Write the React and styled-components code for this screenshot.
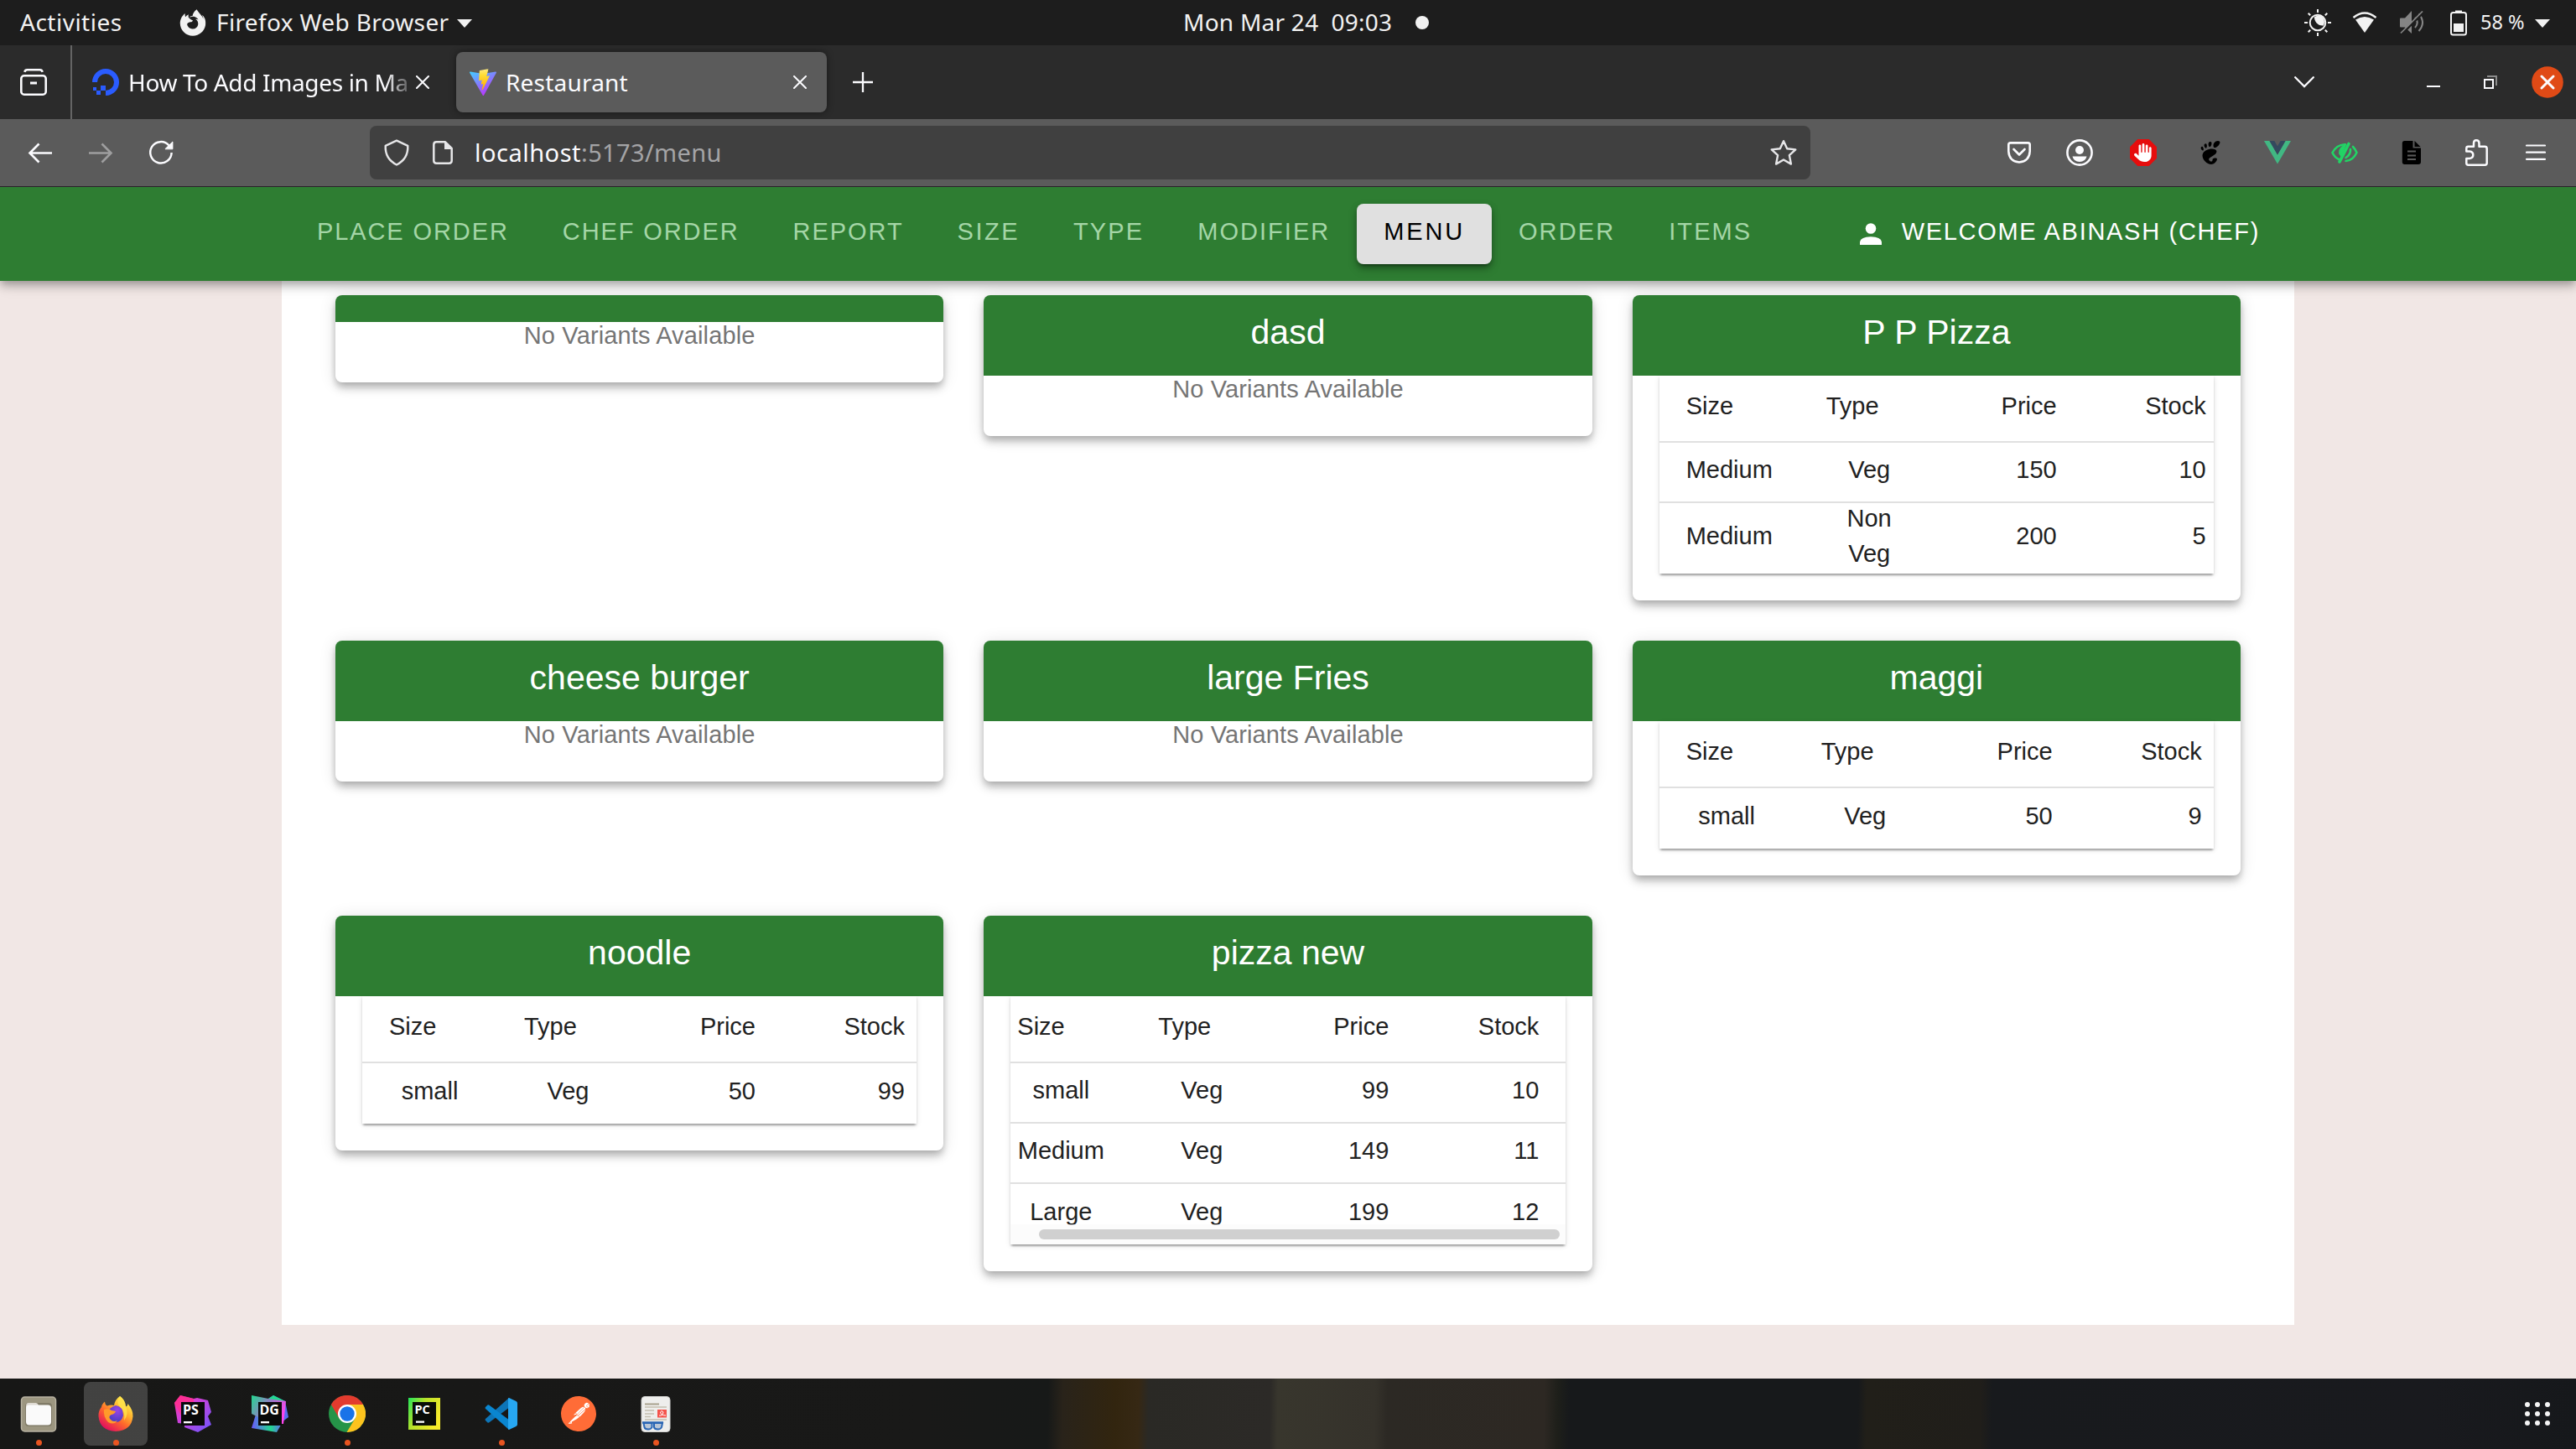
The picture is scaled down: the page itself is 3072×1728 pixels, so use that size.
import React from "react";
import styled, { createGlobalStyle } from "styled-components";
import { FaFirefoxBrowser, FaHand } from "react-icons/fa6";
import { SiGnome, SiPostman } from "react-icons/si";

const uiFont = '"Noto Sans", "Open Sans", sans-serif';
const pageFont = '"Liberation Sans", Arial, sans-serif';

const GlobalStyle = createGlobalStyle`
  *, *::before, *::after { box-sizing: border-box; }
  html, body { margin: 0; padding: 0; background: #181817; }
  svg { display: block; flex: none; }
`;

const Screen = styled.div`
  width: 3072px;
  height: 1728px;
  display: flex;
  flex-direction: column;
  overflow: hidden;
  font-family: ${uiFont};
`;

/* ---------- desktop top bar ---------- */

const TopBar = styled.header`
  height: 54px;
  flex: none;
  display: grid;
  grid-template-columns: 1411px 1fr auto;
  align-items: center;
  background: #1d1d1d;
  color: #f2f2f2;
  font-size: 28px;
  white-space: pre;
`;

const BarGroup = styled.div`
  display: flex;
  align-items: center;
  height: 54px;
  padding: 0 ${(p) => p.$right || 0}px 0 ${(p) => p.$left || 0}px;
`;

const BarText = styled.span`
  line-height: 40px;
  padding-bottom: 2px;
  margin-left: ${(p) => p.$ml || 0}px;
  letter-spacing: ${(p) => p.$ls || 0}px;
  font-size: ${(p) => p.$size || 28}px;
  width: ${(p) => p.$w}px;
  flex: none;
`;

const Caret = styled.span`
  width: 0;
  height: 0;
  margin-top: 2px;
  border-left: 9px solid transparent;
  border-right: 9px solid transparent;
  border-top: 10px solid #f2f2f2;
`;

const NotifyDot = styled.span`
  width: 16px;
  height: 16px;
  border-radius: 50%;
  background: #f2f2f2;
`;

const Status = styled.span`
  display: flex;
  align-items: center;
  margin-right: ${(p) => p.$mr}px;
`;

/* ---------- browser tabs ---------- */

const TabStrip = styled.div`
  height: 88px;
  flex: none;
  display: flex;
  align-items: center;
  background: #2b2b2b;
  color: #fbfbfe;
`;

const ViewButton = styled.div`
  width: 86px;
  height: 88px;
  padding-left: 24px;
  display: flex;
  align-items: center;
  border-right: 2px solid #646464;
`;

const Tab = styled.div`
  width: 442px;
  height: 72px;
  margin-left: 8px;
  padding: 0 24px 0 16px;
  display: flex;
  align-items: center;
  gap: 11px;
  border-radius: 8px;
  background: ${(p) => (p.$active ? "#5b5b5b" : "transparent")};
  box-shadow: ${(p) => (p.$active ? "0 0 8px rgba(0,0,0,.45)" : "none")};
`;

const TabTitle = styled.span`
  flex: 1;
  margin-right: ${(p) => (p.$fade ? -10 : 0)}px;
  white-space: nowrap;
  font-size: 28px;
  line-height: 44px;
  letter-spacing: ${(p) => p.$ls || 0}px;
  mask-image: ${(p) => (p.$fade ? "linear-gradient(90deg,#000 0,#000 90%,transparent 100%)" : "none")};
`;

const NewTab = styled.div`
  margin-left: 31px;
`;

const WindowControls = styled.div`
  margin-left: auto;
  display: flex;
  align-items: center;
  padding-right: 15px;
`;

const Control = styled.div`
  width: ${(p) => p.$w}px;
  display: flex;
  justify-content: flex-start;
`;

/* ---------- browser toolbar ---------- */

const Toolbar = styled.div`
  height: 81px;
  flex: none;
  display: flex;
  align-items: center;
  background: #5b5b5b;
  border-bottom: 1px solid #2a1f2a;
  color: #fbfbfe;
`;

const NavButtons = styled.div`
  width: 441px;
  padding-left: 32px;
  display: flex;
  gap: 40px;
`;

const UrlBar = styled.div`
  width: 1718px;
  height: 64px;
  padding: 0 16px;
  display: flex;
  align-items: center;
  border-radius: 8px;
  background: #404040;
  color: #e6e6e8;
`;

const UrlIcons = styled.div`
  display: flex;
  align-items: center;
  gap: 27px;
`;

const Url = styled.span`
  flex: 1;
  padding-left: 26px;
  font-size: 29px;
  letter-spacing: 0.35px;
  line-height: 44px;
  color: #a4a4a6;
`;

const Host = styled.span`
  color: #fbfbfe;
  letter-spacing: 0.5px;
`;

const Extensions = styled.div`
  margin-left: auto;
  padding-right: 20px;
  display: flex;
`;

const ExtSlot = styled.div`
  width: ${(p) => p.$w || 80}px;
  display: flex;
  align-items: center;
  justify-content: center;
`;

const StopSign = styled.span`
  width: 32px;
  height: 32px;
  display: flex;
  align-items: center;
  justify-content: center;
  background: #e60d0d;
  clip-path: polygon(29% 0, 71% 0, 100% 29%, 100% 71%, 71% 100%, 29% 100%, 0 71%, 0 29%);
`;

/* ---------- application ---------- */

const Page = styled.div`
  flex: 1;
  display: flex;
  flex-direction: column;
  background: #f1e7e5;
  font-family: ${pageFont};
  overflow: hidden;
`;

const AppBar = styled.nav`
  height: 112px;
  flex: none;
  position: relative;
  z-index: 2;
  display: flex;
  align-items: center;
  padding: 0 377px 0 346px;
  background: #2e7d32;
  box-shadow: 0 4px 8px -2px rgba(0, 0, 0, 0.2), 0 8px 10px 0 rgba(0, 0, 0, 0.14),
    0 2px 20px 0 rgba(0, 0, 0, 0.12);
`;

const NavItem = styled.a`
  height: 72px;
  padding: 0 32px 6px;
  display: flex;
  align-items: center;
  border-radius: 8px;
  font-size: 29px;
  letter-spacing: ${(p) => p.$ls}px;
  white-space: nowrap;
  color: ${(p) => (p.$active ? "#000" : "#a5d6a7")};
  background: ${(p) => (p.$active ? "#e0e0e0" : "transparent")};
  box-shadow: ${(p) =>
    p.$active
      ? "0 6px 2px -4px rgba(0,0,0,.2), 0 4px 4px 0 rgba(0,0,0,.14), 0 2px 10px 0 rgba(0,0,0,.12), 0 6px 12px rgba(0,0,0,.2)"
      : "none"};
`;

const User = styled.div`
  margin-left: auto;
  display: flex;
  align-items: center;
  gap: 24px;
  color: #fff;
  font-size: 29px;
  letter-spacing: 1.7px;
  white-space: nowrap;
`;

const UserName = styled.span`
  padding-bottom: 6px;
`;

const Content = styled.main`
  width: 2400px;
  height: 1245px;
  margin: 0 auto;
  padding: 17px 64px 64px;
  background: #fff;
`;

const CardGrid = styled.div`
  display: grid;
  grid-template-columns: repeat(3, 1fr);
  grid-template-rows: 364px 280px 424px;
  gap: 48px;
  align-items: start;
`;

const CardBox = styled.section`
  min-width: 0;
  border-radius: 8px;
  background: #fff;
  overflow: hidden;
  box-shadow: 0 4px 8px -2px rgba(0, 0, 0, 0.2), 0 8px 10px 0 rgba(0, 0, 0, 0.14),
    0 2px 20px 0 rgba(0, 0, 0, 0.12);
`;

const CardTitle = styled.h2`
  margin: 0;
  height: ${(p) => (p.$empty ? 32 : 96)}px;
  padding: ${(p) => (p.$empty ? "0" : "16px 0 24px")};
  line-height: 56px;
  background: #2e7d32;
  color: #fff;
  font-size: 41px;
  font-weight: 400;
  text-align: center;
`;

const CardBody = styled.div`
  padding: 0 32px 32px;
`;

const Empty = styled.p`
  margin: 0;
  height: 40px;
  line-height: 33px;
  text-align: center;
  color: #757575;
  font-size: 29px;
  letter-spacing: 0.13px;
`;

const Paper = styled.div`
  position: relative;
  height: ${(p) => p.$h}px;
  overflow: hidden;
  background: #fff;
`;

const PaperShadow = styled.div`
  box-shadow: 0 4px 2px -2px rgba(0, 0, 0, 0.2), 0 2px 2px 0 rgba(0, 0, 0, 0.14),
    0 2px 6px 0 rgba(0, 0, 0, 0.12);
`;

const Row = styled.div`
  display: grid;
  grid-template-columns: ${(p) => p.$cols};
  grid-template-rows: 100%;
  align-items: center;
  height: ${(p) => p.$h}px;
  width: 700px;
  margin-left: ${(p) => -p.$scroll}px;
  border-bottom: ${(p) => (p.$last ? "none" : "2px solid #e0e0e0")};
`;

const Cell = styled.div`
  padding: 0 ${(p) => (p.$narrow ? 44 : 32)}px 7px;
  text-align: ${(p) => p.$align};
  font-size: 29px;
  line-height: 42px;
  color: #212121;
`;

const ScrollTrack = styled.div`
  position: absolute;
  left: 0;
  right: 0;
  bottom: 0;
  height: 24px;
  padding: 6px 7px 6px 34px;
  background: rgba(250, 250, 250, 0.6);
`;

const ScrollThumb = styled.div`
  height: 12px;
  border-radius: 6px;
  background: #d0d0d0;
`;

/* ---------- dock ---------- */

const Dock = styled.footer`
  height: 84px;
  flex: none;
  display: flex;
  align-items: center;
  gap: 16px;
  padding: 0 31px 0 8px;
  background: linear-gradient(
    91deg,
    #171716 0,
    #191918 1100px,
    #171918 1250px,
    #29231a 1268px,
    #32250f 1330px,
    #362814 1358px,
    #2a2925 1370px,
    #2c2a27 1515px,
    #38362d 1524px,
    #35322b 1640px,
    #2c2924 1655px,
    #2d2823 1842px,
    #1e1f1a 1858px,
    #17191b 1872px,
    #17191b 2216px,
    #211f19 2226px,
    #201e1a 2362px,
    #181a1d 2376px,
    #191a1e 2900px,
    #16181b 3072px
  );
`;

const DockSlot = styled.div`
  width: 76px;
  height: 76px;
  padding-top: 16px;
  display: flex;
  flex-direction: column;
  align-items: center;
  gap: 9px;
  border-radius: 8px;
  background: ${(p) => (p.$active ? "rgba(255,255,255,.19)" : "transparent")};
`;

const RunDot = styled.span`
  width: 7px;
  height: 7px;
  border-radius: 50%;
  background: #e95420;
`;

const AppsGrid = styled.div`
  margin-left: auto;
  display: grid;
  grid-template-columns: repeat(3, 6px);
  gap: 5px 6px;
`;

const AppsDot = styled.span`
  height: 6px;
  border-radius: 3px;
  background: #f5f5f5;
`;

/* ---------- icons ---------- */

const Line = ({ w = 32, h = 32, sw = 2, children, ...rest }) => (
  <svg width={w} height={h} viewBox={`0 0 ${w} ${h}`} fill="none" stroke="currentColor" strokeWidth={sw} {...rest}>
    {children}
  </svg>
);

const NightLight = () => (
  <Line>
    <circle cx="16" cy="16" r="9.3" />
    <path d="M12 9 C11.500 14.500 16.500 20.500 23 19.500 C26 13 21.500 6.500 16 7.500Z" fill="currentColor" stroke="none" />
    <path d="M16 0v4M16 28v4M0 16h4M28 16h4M4.700 4.700l2.500 2.500M24.800 24.800l2.500 2.500M4.700 27.300l2.500-2.500M24.800 7.200l2.500-2.500" />
  </Line>
);

const Wifi = () => (
  <Line w={30} h={26}>
    <path d="M1.500 7 Q15-4 28.500 7" strokeWidth="2.400" />
    <path d="M4 9.500 Q15 2.500 26 9.500 L15 25Z" fill="currentColor" stroke="none" />
  </Line>
);

const Muted = () => (
  <Line w={28} h={28} color="#858585">
    <path d="M0 9.500 Q0 8.500 1 8.500 H6 L14 0 V27 L6 19.500 H1 Q0 19.500 0 18.500Z" fill="currentColor" stroke="none" />
    <path d="M18 8 Q23.500 14 18 20M22.500 3.500 Q31.500 14 22.500 24" />
    <path d="M1 29 L27 3" stroke="#1d1d1d" strokeWidth="2.500" />
    <path d="M1 26.500 L27 0.500" strokeWidth="1.700" />
  </Line>
);

const Battery = () => (
  <Line w={20} h={31}>
    <rect x="1" y="3" width="18" height="26.500" rx="2.500" />
    <path d="M6 0.500h8v2h-8z" fill="currentColor" stroke="none" />
    <path d="M4 16h12v10H4z" fill="currentColor" stroke="none" />
  </Line>
);

const FirefoxView = () => (
  <Line>
    <rect x="1.300" y="8.300" width="29.400" height="22.400" rx="3.500" strokeWidth="2.600" />
    <path d="M5.300 3.800 Q6 1.300 8.500 1.300 H23.500 Q26 1.300 26.700 3.800" strokeWidth="2.600" />
    <path d="M12 17h8" strokeWidth="3" />
  </Line>
);

const OceanLogo = () => (
  <Line stroke="none">
    <path d="M16 32V26A10 10 0 1 0 6 16H0A16 16 0 1 1 16 32Z" fill="#2a5cff" />
    <path d="M10 20h6v6h-6zM5 26h5v5H5zM1 22h4v4H1z" fill="#2a5cff" />
  </Line>
);

const ViteLogo = () => (
  <Line stroke="none">
    <defs>
      <linearGradient id="va" x1="0" y1="0" x2="0.600" y2="1">
        <stop offset="0" stopColor="#41d1ff" />
        <stop offset="1" stopColor="#bd34fe" />
      </linearGradient>
      <linearGradient id="vb" x1="0" y1="0" x2="0" y2="1">
        <stop offset="0" stopColor="#ffea83" />
        <stop offset="0.300" stopColor="#ffdd35" />
        <stop offset="1" stopColor="#ffa800" />
      </linearGradient>
    </defs>
    <path d="M31.900 4.700 17.100 31.400a.9.900 0 0 1-1.500 0L.1 4.700A.85.850 0 0 1 1 3.500l15 2.600 15-2.600c.7-.1 1.200.6.900 1.200z" fill="url(#va)" />
    <path d="M23.200 0 12.200 2.100c-.2 0-.3.200-.4.400l-.7 11.400c0 .3.200.5.500.4l3.100-.7-.9 4.500c-.1.300.2.500.5.400l1.900-.6-1.500 7c-.1.500.5.700.8.300l8.300-16.400c.2-.3-.1-.6-.4-.5l-3.200.6 2-7.300c0-.3-.2-.6-1-.600z" fill="url(#vb)" />
  </Line>
);

const Close = () => (
  <Line w={16} h={16} strokeLinecap="round">
    <path d="M1 1l14 14M15 1L1 15" />
  </Line>
);

const Plus = () => (
  <Line w={24} h={24} sw={2.3}>
    <path d="M12 0v24M0 12h24" />
  </Line>
);

const ChevronDown = () => (
  <Line w={24} h={14} sw={2.3} strokeLinecap="round">
    <path d="M1.200 1.200L12 12L22.800 1.200" />
  </Line>
);

const Minimize = () => (
  <Line w={16} h={16}>
    <path d="M0 13h16" />
  </Line>
);

const Restore = () => (
  <Line w={16} h={16}>
    <path d="M1 5h10v10H1z" />
    <path d="M4 1h11v11" stroke="#8b8b8b" />
  </Line>
);

const CloseWindow = () => (
  <Line w={38} h={38} strokeLinecap="round">
    <circle cx="19" cy="19" r="18.800" fill="#e04a16" stroke="none" />
    <path d="M12 12l14 14M26 12L12 26" strokeWidth="3" />
  </Line>
);

const Back = () => (
  <Line sw={2.6}>
    <path d="M30 16.500H3.500M14.500 5.500L3.500 16.500L14.500 27.500" />
  </Line>
);

const Forward = () => (
  <Line sw={2.6} opacity="0.42">
    <path d="M2 16.500H28.500M17.500 5.500L28.500 16.500L17.500 27.500" />
  </Line>
);

const Reload = () => (
  <Line sw={2.5}>
    <path d="M28.600 16A12.700 12.700 0 1 1 25.500 7.500" />
    <path d="M30 2.500V11.500H20.500Z" fill="currentColor" stroke="none" />
    <path d="M21 11.800h8.900V3" strokeWidth="1" />
  </Line>
);

const Shield = () => (
  <Line sw={2.4} strokeLinejoin="round">
    <path d="M16 1.600L29.300 7.800Q30 23.500 16 30.500Q2 23.500 2.700 7.800Z" />
  </Line>
);

const PageIcon = () => (
  <Line w={24} h={28} sw={2.5}>
    <path d="M15 1.300H4.500Q1.300 1.300 1.300 4.500V23.500Q1.300 26.700 4.500 26.700H19.500Q22.700 26.700 22.700 23.500V9Z" strokeLinejoin="round" />
    <path d="M14 1V10H23Z" fill="currentColor" stroke="none" />
  </Line>
);

const Star = () => (
  <Line sw={2.4} strokeLinejoin="round">
    <path d="M16 2.200L20.200 11.200L30.300 12.400L22.900 19.200L24.900 29.600L16 24.500L7.100 29.600L9.100 19.200L1.700 12.400L11.800 11.200Z" />
  </Line>
);

const Pocket = () => (
  <Line w={28} h={26} sw={2.6} strokeLinecap="round" strokeLinejoin="round">
    <path d="M3.500 1.400H24.500Q26.700 1.400 26.700 3.600V11.500Q26 23.500 14 24.500Q2 23.500 1.300 11.500V3.600Q1.300 1.400 3.500 1.400Z" />
    <path d="M7.500 9L14 15.500L20.500 9" />
  </Line>
);

const Account = () => (
  <Line sw={2.6}>
    <circle cx="16" cy="16" r="14.600" />
    <circle cx="16" cy="13" r="5" fill="currentColor" stroke="none" />
    <path d="M7.500 20.500H24.500Q23 27 16 27Q9 27 7.500 20.500Z" fill="currentColor" stroke="none" />
  </Line>
);

const Vue = () => (
  <Line w={32} h={28} stroke="none">
    <path d="M0 0H6.500L16 16.500L25.500 0H32L16 27.500Z" fill="#41b883" />
    <path d="M6.500 0H12.300L16 6.200L19.700 0H25.500L16 16.500Z" fill="#34495e" />
  </Line>
);

const EyeOff = () => (
  <Line w={32} h={26} sw={2.6} color="#22d465" strokeLinecap="round">
    <path d="M9 21Q4 18.500 1.500 13Q6.500 3.500 17 3.200" />
    <path d="M26 6Q29 9 30.500 13Q26 22.500 17.500 23" />
    <path d="M21 2.500L10 24" strokeWidth="3.600" />
    <path d="M17 4Q9 7 10 14.500L12 17Z" fill="currentColor" strokeWidth="1.500" />
    <path d="M23 9Q23.500 15.500 17.500 19" />
  </Line>
);

const DocIcon = () => (
  <Line w={24} h={28} stroke="none">
    <path d="M3.500 0H13.500V8.500H23V25Q23 28 20 28H3.500Q.8 28 .8 25V3Q.8 0 3.500 0Z" fill="#000" />
    <path d="M15.500 0L22.500 7H15.500Z" fill="#000" />
    <path d="M7 12.500h10M7 17.500h10M7 22h10" stroke="#5b5b5b" strokeWidth="2" />
  </Line>
);

const Puzzle = () => (
  <Line sw={2.5} strokeLinejoin="round">
    <path d="M1.300 14.500V11Q1.300 8.800 3.500 8.800H10V5Q10 1.300 13 1.300Q16.500 1.300 16.500 5V8.800H23Q25.700 8.800 25.700 11V28.500Q25.700 30.700 23.500 30.700H3.500Q1.300 30.700 1.300 28.500V23H5Q9.300 22.500 9.300 18.800Q9.300 15 5 14.500Z" />
  </Line>
);

const Hamburger = () => (
  <Line w={24} h={20} sw={2.2} strokeLinecap="round">
    <path d="M1 1.500h22M1 9.700h22M1 17.800h22" />
  </Line>
);

const Person = () => (
  <Line w={26} h={26} stroke="none">
    <circle cx="13" cy="6.500" r="6.300" fill="currentColor" />
    <path d="M0 26V22.500Q1 16.500 13 16.300Q25 16.500 26 22.500V26Z" fill="currentColor" />
  </Line>
);

const Dk = ({ children }) => (
  <svg width="44" height="44" viewBox="0 0 44 44">
    {children}
  </svg>
);

const Files = () => (
  <Dk>
    <rect x="1.500" y="2" width="41" height="41" rx="4" fill="#9c9680" stroke="#b9b3a2" strokeWidth="1.500" />
    <rect x="6" y="9" width="32" height="28" rx="4" fill="#6e6957" opacity=".6" />
    <path d="M7 13Q7 9 10 9H19Q21 9 22 12H28V20H7Z" fill="#dedad2" />
    <rect x="7" y="11.500" width="30" height="24" rx="4" fill="#fafafa" />
  </Dk>
);

const Firefox = () => (
  <Dk>
    <defs>
      <linearGradient id="fa" x1="0.850" y1="0.100" x2="0.250" y2="0.950">
        <stop offset="0" stopColor="#fff44f" />
        <stop offset="0.350" stopColor="#ffb02e" />
        <stop offset="0.600" stopColor="#ff6a2b" />
        <stop offset="1" stopColor="#e3105d" />
      </linearGradient>
      <radialGradient id="fb" cx="0.600" cy="0.300" r="0.700">
        <stop offset="0" stopColor="#9a45e6" />
        <stop offset="1" stopColor="#4a3dc4" />
      </radialGradient>
    </defs>
    <path d="M27 1Q33 5 34 13Q36 14 36.500 10Q43 18 42.500 25Q41 42 22 43Q3 42 1.500 25Q1 19 5 14Q5 11 9 7.500Q9.500 12 12 12.500Q16 11 20 12Q21 5 27 1Z" fill="url(#fa)" />
    <path d="M22 12Q31 13 31 24Q29 32 22 32Q13 31 13 22Q14 14 22 12Z" fill="url(#fb)" />
    <path d="M8 17Q14 15 17 18L22 19Q21 22 17 23Q14 24 14.500 27Q18 33 24 30Q20 36 13 32Q7 26 8 17Z" fill="#ff9a2a" />
    <path d="M27 1Q33 5 34 13Q38 22 32 30Q34 20 27 13.500Q22 9 27 1Z" fill="#ffe04a" opacity=".85" />
  </Dk>
);

const Mono = ({ x = 10, children }) => (
  <>
    <path d="M8 8h28v28H8z" fill="#0a0a0a" />
    <text x={x} y="23" fill="#fff" fontFamily='"Open Sans", "Noto Sans", sans-serif' fontWeight="700" fontSize="16">
      {children}
    </text>
    <path d="M11 31h10v2.300H11z" fill="#fff" />
  </>
);

const PhpStorm = () => (
  <Dk>
    <defs>
      <linearGradient id="pa" x1="0" y1="0" x2="1" y2="1">
        <stop offset="0" stopColor="#ff318c" />
        <stop offset="0.350" stopColor="#d43fd6" />
        <stop offset="1" stopColor="#6b57ff" />
      </linearGradient>
    </defs>
    <path d="M0 9L7 0L23 4L27 3L40 6L44 20L40 25L44 35L28 44L12 38V34L4 33Z" fill="url(#pa)" />
    <path d="M7 0L23 4V9H8V24L0 9Z" fill="#ff2d90" opacity=".8" />
    <Mono>PS</Mono>
  </Dk>
);

const DataGrip = () => (
  <Dk>
    <defs>
      <linearGradient id="da" x1="0" y1="0" x2="1" y2="0.500">
        <stop offset="0" stopColor="#22d88f" />
        <stop offset="0.550" stopColor="#9a78c8" />
        <stop offset="1" stopColor="#ff45ed" />
      </linearGradient>
      <linearGradient id="db" x1="0" y1="0" x2="1" y2="0">
        <stop offset="0" stopColor="#6b57ff" />
        <stop offset="0.600" stopColor="#22d88f" />
        <stop offset="1" stopColor="#6b57ff" />
      </linearGradient>
    </defs>
    <path d="M5 23L0 39L30 44L38 30Z" fill="url(#db)" />
    <path d="M20 4L26 0L40 7L44 26L36 32Z" fill="#5a6bf0" />
    <path d="M20 4L26 0L40 7V12Z" fill="#22d88f" />
    <path d="M0 0L20 4L41 7L38 34H30L8 26L0 22Z" fill="url(#da)" />
    <Mono x={9.5}>DG</Mono>
  </Dk>
);

const Chrome = () => (
  <Dk>
    <circle cx="22" cy="22" r="22" fill="#259448" />
    <path d="M22 11H41A22 22 0 0 1 21.500 44L31.500 27.500Z" fill="#fcc31e" />
    <path d="M2.900 11A22 22 0 0 1 41.100 11H22L12.500 27.500Z" fill="#e33b2e" />
    <circle cx="22" cy="22" r="11" fill="#fff" />
    <circle cx="22" cy="22" r="8.700" fill="#1a73e8" />
  </Dk>
);

const PyCharm = () => (
  <Dk>
    <defs>
      <linearGradient id="ya" x1="0" y1="0" x2="1" y2="0.500">
        <stop offset="0" stopColor="#21e55a" />
        <stop offset="0.450" stopColor="#b8e22a" />
        <stop offset="1" stopColor="#f5ea2a" />
      </linearGradient>
    </defs>
    <path d="M3 3h38v38H3z" fill="url(#ya)" />
    <path d="M8 8h28v28H8z" fill="#0a0d08" />
    <text x="10.500" y="22" fill="#fff" fontFamily='"Open Sans", "Noto Sans", sans-serif' fontWeight="700" fontSize="14.500">
      PC
    </text>
    <path d="M12 30.500h10v2.300H12z" fill="#fff" />
  </Dk>
);

const VsCode = () => (
  <Dk>
    <path d="M31 3L3 28Q2 29 3 30L5.500 32.500Q6.500 33 7.500 32.300L32 14Z" fill="#0d75b8" />
    <path d="M31 41L3 16Q2 15 3 14L5.500 11.500Q6.500 11 7.500 11.700L32 30Z" fill="#0a86d0" />
    <path d="M31 3L39.500 7Q41 7.800 41 9.500V34.500Q41 36.200 39.500 37L31 41Q30 41 30 40V4Q30 3 31 3Z" fill="#27a7f2" />
  </Dk>
);

const PostmanWrap = styled.span`
  width: 44px;
  height: 44px;
  display: flex;
  align-items: center;
  justify-content: center;
  color: #ff6c37;
  background: radial-gradient(circle, #fff 0 18px, transparent 18.5px);
`;

const DocViewer = () => (
  <Dk>
    <rect x="5" y="1.500" width="34" height="42" rx="4" fill="#eeeeec" stroke="#d0d0ce" />
    <path d="M9 10.500h17" stroke="#a8a28e" strokeWidth="2" />
    <path d="M9 14h26M9 18h11M9 22h11M9 25.500h7M9 29h26" stroke="#c4bfae" strokeWidth="1.600" />
    <path d="M24 17h11v9.500H24z" fill="#f5544c" />
    <path d="M26 24Q30 25 31 20Q29 17 27.500 20Q28 24 34 24" fill="none" stroke="#fff" />
    <path d="M7.500 33H17.500V38Q16.500 40.500 13 40.500Q9 40.500 8.500 38ZM20 33H30L29 38Q28 40.500 24.500 40.500Q20.500 40.500 20 38Z" fill="#b9c6d6" stroke="#2a66b4" strokeWidth="2" />
    <path d="M6 32.500H31" stroke="#2a66b4" strokeWidth="2.500" />
  </Dk>
);

/* ---------- data ---------- */

const navItems = [
  { label: "PLACE ORDER", spacing: 1.9 },
  { label: "CHEF ORDER", spacing: 1.9 },
  { label: "REPORT", spacing: 1.95 },
  { label: "SIZE", spacing: 2.5 },
  { label: "TYPE", spacing: 2.1 },
  { label: "MODIFIER", spacing: 2.05 },
  { label: "MENU", spacing: 2.8, active: true },
  { label: "ORDER", spacing: 2.1 },
  { label: "ITEMS", spacing: 2.1 },
];

const narrowCols = "161px 169px 171px 178px";
const cards = [
  { title: "" },
  { title: "dasd" },
  {
    title: "P P Pizza",
    cols: "167px 167px 172px 178px",
    rows: [
      ["Medium", "Veg", "150", "10"],
      ["Medium", "Non Veg", "200", "5"],
    ],
    lastHeight: 84,
  },
  { title: "cheese burger" },
  { title: "large Fries" },
  { title: "maggi", cols: narrowCols, rows: [["small", "Veg", "50", "9"]] },
  { title: "noodle", cols: narrowCols, rows: [["small", "Veg", "50", "99"]] },
  {
    title: "pizza new",
    cols: "168px 168px 171px 179px",
    scroll: 24,
    rows: [
      ["small", "Veg", "99", "10"],
      ["Medium", "Veg", "149", "11"],
      ["Large", "Veg", "199", "12"],
    ],
  },
];

const headAlign = ["left", "left", "right", "right"];
const bodyAlign = ["center", "center", "right", "right"];
const headings = ["Size", "Type", "Price", "Stock"];

function VariantTable({ cols, rows, scroll = 0, lastHeight = 72 }) {
  const rowHeight = (i) => (i < rows.length - 1 ? 72 : lastHeight);
  const total = 80 + rows.reduce((sum, _, i) => sum + rowHeight(i), 0);
  return (
    <PaperShadow>
      <Paper $h={total}>
        <Row $cols={cols} $h={80} $scroll={scroll}>
          {headings.map((h, i) => (
            <Cell key={h} $align={headAlign[i]}>{h}</Cell>
          ))}
        </Row>
        {rows.map((row, r) => (
          <Row key={r} $cols={cols} $h={rowHeight(r)} $scroll={scroll} $last={r === rows.length - 1}>
            {row.map((v, i) => (
              <Cell key={i} $align={bodyAlign[i]} $narrow={v === "Non Veg"}>{v}</Cell>
            ))}
          </Row>
        ))}
        {scroll > 0 && (
          <ScrollTrack>
            <ScrollThumb />
          </ScrollTrack>
        )}
      </Paper>
    </PaperShadow>
  );
}

function Card({ title, rows, ...table }) {
  return (
    <CardBox>
      <CardTitle $empty={!title}>{title}</CardTitle>
      <CardBody>{rows ? <VariantTable rows={rows} {...table} /> : <Empty>No Variants Available</Empty>}</CardBody>
    </CardBox>
  );
}

const dockApps = [
  { name: "files", icon: <Files />, running: true },
  { name: "firefox", icon: <Firefox />, running: true, active: true },
  { name: "phpstorm", icon: <PhpStorm /> },
  { name: "datagrip", icon: <DataGrip /> },
  { name: "chrome", icon: <Chrome />, running: true },
  { name: "pycharm", icon: <PyCharm /> },
  { name: "vscode", icon: <VsCode />, running: true },
  { name: "postman", icon: <PostmanWrap><SiPostman size={42} /></PostmanWrap> },
  { name: "viewer", icon: <DocViewer />, running: true },
];

export default function App() {
  return (
    <Screen>
      <GlobalStyle />
      <TopBar>
        <BarGroup $left={24}>
          <BarText $w={190} $ls={0.5}>Activities</BarText>
          <FaFirefoxBrowser size={32} />
          <BarText $w={287} $ml={12} $ls={0.35}>Firefox Web Browser</BarText>
          <Caret />
        </BarGroup>
        <BarGroup>
          <BarText $w={277} $ls={0.25}>Mon Mar 24  09:03</BarText>
          <NotifyDot />
        </BarGroup>
        <BarGroup $right={31}>
          <Status $mr={25}><NightLight /></Status>
          <Status $mr={27}><Wifi /></Status>
          <Status $mr={32}><Muted /></Status>
          <Status $mr={16}><Battery /></Status>
          <BarText $w={65} $size={23.5}>58 %</BarText>
          <Caret />
        </BarGroup>
      </TopBar>

      <TabStrip>
        <ViewButton><FirefoxView /></ViewButton>
        <Tab>
          <OceanLogo />
          <TabTitle $fade $ls={-0.35}>How To Add Images in Ma</TabTitle>
          <Close />
        </Tab>
        <Tab $active>
          <ViteLogo />
          <TabTitle $ls={0.2}>Restaurant</TabTitle>
          <Close />
        </Tab>
        <NewTab><Plus /></NewTab>
        <WindowControls>
          <Control $w={158}><ChevronDown /></Control>
          <Control $w={68}><Minimize /></Control>
          <Control $w={57}><Restore /></Control>
          <CloseWindow />
        </WindowControls>
      </TabStrip>

      <Toolbar>
        <NavButtons>
          <Back />
          <Forward />
          <Reload />
        </NavButtons>
        <UrlBar>
          <UrlIcons>
            <Shield />
            <PageIcon />
          </UrlIcons>
          <Url><Host>localhost</Host>:5173/menu</Url>
          <Star />
        </UrlBar>
        <Extensions>
          <ExtSlot $w={72}><Pocket /></ExtSlot>
          <ExtSlot $w={72}><Account /></ExtSlot>
          <ExtSlot><StopSign><FaHand size={22} color="#fff" /></StopSign></ExtSlot>
          <ExtSlot><SiGnome size={28} color="#000" /></ExtSlot>
          <ExtSlot><Vue /></ExtSlot>
          <ExtSlot><EyeOff /></ExtSlot>
          <ExtSlot><DocIcon /></ExtSlot>
          <ExtSlot><Puzzle /></ExtSlot>
          <ExtSlot $w={56}><Hamburger /></ExtSlot>
        </Extensions>
      </Toolbar>

      <Page>
        <AppBar>
          {navItems.map((n) => (
            <NavItem key={n.label} $active={n.active} $ls={n.spacing}>{n.label}</NavItem>
          ))}
          <User>
            <Person />
            <UserName>WELCOME ABINASH (CHEF)</UserName>
          </User>
        </AppBar>
        <Content>
          <CardGrid>
            {cards.map((c, i) => (
              <Card key={i} {...c} />
            ))}
          </CardGrid>
        </Content>
      </Page>

      <Dock>
        {dockApps.map((a) => (
          <DockSlot key={a.name} $active={a.active}>
            {a.icon}
            {a.running && <RunDot />}
          </DockSlot>
        ))}
        <AppsGrid>
          {Array.from({ length: 9 }, (_, i) => (
            <AppsDot key={i} />
          ))}
        </AppsGrid>
      </Dock>
    </Screen>
  );
}
